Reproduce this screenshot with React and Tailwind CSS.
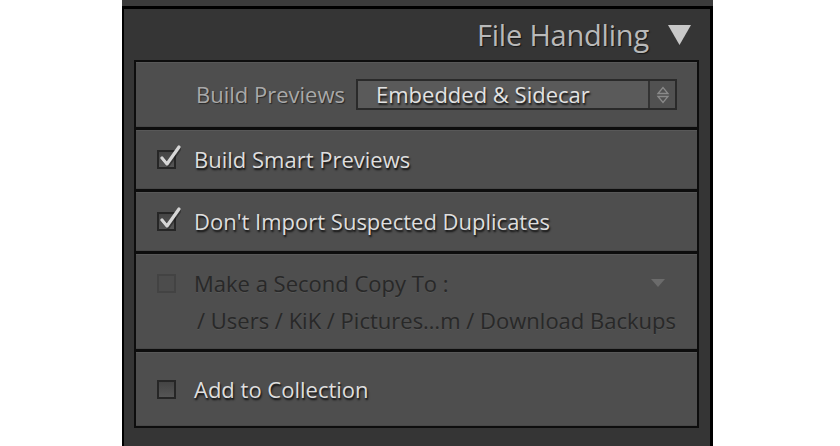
import React from 'react';

const font = { fontFamily: '"Open Sans", "Noto Sans", sans-serif' };

const Check = ({ checked, muted }) => (
  <div className="relative w-[19px] h-[19px] shrink-0">
    <div
      className={
        muted
          ? 'w-full h-full border-2 border-[#434343] bg-[#4c4c4c]'
          : 'w-full h-full border-2 border-[#262626] bg-gradient-to-b from-[#444] to-[#565656]'
      }
    />
    {checked && (
      <svg className="absolute -top-[5px] left-[2px]" width="22" height="22" viewBox="0 0 22 22">
        <path d="M3 13 L8 19 L20 2" fill="none" stroke="#1c1c1c" strokeWidth="4" strokeLinecap="round" strokeLinejoin="round" opacity="0.5" transform="translate(1 1)" />
        <path d="M3 13 L8 19 L20 2" fill="none" stroke="#d6d6d6" strokeWidth="3.2" strokeLinecap="round" strokeLinejoin="round" />
      </svg>
    )}
  </div>
);

const Row = ({ className = '', children }) => (
  <div className={`bg-[#4e4e4e] border-t border-[#585858] border-b border-b-[#474747] ${className}`}>{children}</div>
);

export default function App() {
  return (
    <div className="w-[840px] h-[446px] bg-white overflow-hidden" style={font}>
      <div className="ml-[122px] w-[591px] h-full flex flex-col">
        {/* edge of the panel above */}
        <div className="h-[6px] bg-[#3b3b3b]" />
        <div className="flex-1 bg-[#353535] border-t-[3px] border-l-2 border-r-[3px] border-black flex flex-col">
          {/* header */}
          <div className="h-[51px] flex items-center justify-end pr-[18px] gap-[18px]">
            <span className="text-[29px] text-[#b9b9b9] tracking-[-0.2px] [text-shadow:1px_1px_1px_rgba(0,0,0,0.6)]">
              File Handling
            </span>
            <svg width="25" height="22" viewBox="0 0 25 22" className="mt-[1px]">
              <path d="M1 1 H24 L12.5 21 Z" fill="#c8c8c8" />
            </svg>
          </div>

          {/* options box */}
          <div className="ml-[10px] mr-[11px] border-2 border-[#0d0d0d] bg-[#0d0d0d] flex flex-col gap-[3px]">
            <Row className="h-[65px] flex items-center">
              <span className="ml-[60px] text-[22px] text-[#a9a9a9] [text-shadow:1px_1px_1px_rgba(0,0,0,0.5)]">
                Build Previews
              </span>
              <div className="ml-[11px] w-[321px] h-[31px] flex border-2 border-[#2a2a2a] bg-[#5a5a5a]">
                <div className="flex-1 flex items-center pl-[18px] text-[22px] text-[#e2e2e2] [text-shadow:1px_2px_2px_rgba(0,0,0,0.85)]">
                  Embedded &amp; Sidecar
                </div>
                <div className="w-[27px] border-l-2 border-[#333] bg-[#515151] flex items-center justify-center">
                  <svg width="14" height="20" viewBox="0 0 14 20">
                    <path d="M2 8.5 L7 2.5 L12 8.5 Z" fill="none" stroke="#8a8a8a" strokeWidth="1.3" />
                    <path d="M2 11.5 L7 17.5 L12 11.5 Z" fill="none" stroke="#8a8a8a" strokeWidth="1.3" />
                  </svg>
                </div>
              </div>
            </Row>

            <Row className="h-[59px] flex items-center pl-[21px] gap-[18px]">
              <Check checked />
              <span className="text-[22px] text-[#dedede] [text-shadow:1px_2px_2px_rgba(0,0,0,0.85)]">
                Build Smart Previews
              </span>
            </Row>

            <Row className="h-[59px] flex items-center pl-[21px] gap-[18px]">
              <Check checked />
              <span className="text-[22px] text-[#dedede] [text-shadow:1px_2px_2px_rgba(0,0,0,0.85)]">
                Don't Import Suspected Duplicates
              </span>
            </Row>

            <Row className="h-[95px] flex flex-col justify-center pl-[21px] pr-[16px] gap-[4px]">
              <div className="flex items-center gap-[18px]">
                <Check muted />
                <span className="flex-1 text-[22px] text-[#282828] [text-shadow:0_1px_0_rgba(255,255,255,0.06)]">
                  Make a Second Copy To :
                </span>
                <svg width="14" height="8" viewBox="0 0 14 8" className="mr-[16px]">
                  <path d="M0 0 H14 L7 8 Z" fill="#6b6b6b" />
                </svg>
              </div>
              <div className="pl-[40px] text-[22px] text-[#282828] whitespace-nowrap [text-shadow:0_1px_0_rgba(255,255,255,0.06)]">
                / Users / KiK / Pictures…m / Download Backups
              </div>
            </Row>

            <Row className="h-[74px] flex items-center pl-[21px] gap-[18px]">
              <Check />
              <span className="text-[22px] text-[#dedede] [text-shadow:1px_2px_2px_rgba(0,0,0,0.85)]">
                Add to Collection
              </span>
            </Row>
          </div>
        </div>
      </div>
    </div>
  );
}
